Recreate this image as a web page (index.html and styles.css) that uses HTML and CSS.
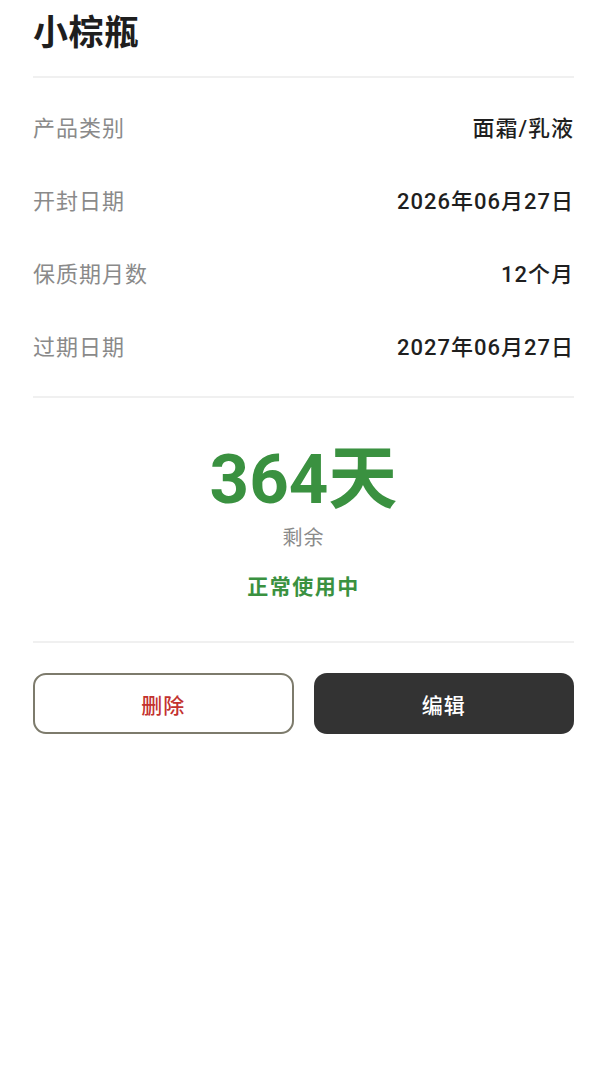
FILE: index.html
```html
<!DOCTYPE html>
<html lang="zh-CN">
<head>
<meta charset="utf-8">
<title>小棕瓶</title>
<link rel="stylesheet" href="styles.css">
</head>
<body>
<div class="page">
  <h1 class="title">小棕瓶</h1>
  <hr class="divider">
  <div class="info">
    <div class="row"><span class="label">产品类别</span><span class="value">面霜/乳液</span></div>
    <div class="row"><span class="label">开封日期</span><span class="value">2026年06月27日</span></div>
    <div class="row"><span class="label">保质期月数</span><span class="value">12个月</span></div>
    <div class="row"><span class="label">过期日期</span><span class="value">2027年06月27日</span></div>
  </div>
  <hr class="divider">
  <div class="remain">
    <div class="days">364天</div>
    <div class="remain-label">剩余</div>
    <div class="status">正常使用中</div>
  </div>
  <hr class="divider">
  <div class="actions">
    <button class="btn btn-delete">删除</button>
    <button class="btn btn-edit">编辑</button>
  </div>
</div>
</body>
</html>
```
FILE: styles.css
```css
* { box-sizing: border-box; }
html, body {
  margin: 0;
  padding: 0;
  background: #ffffff;
}
body {
  font-family: Roboto, "Noto Sans CJK SC", "Noto Sans", sans-serif;
  color: #222222;
}
.page {
  padding: 13px 33px 0 33px;
}
.title {
  margin: 0;
  font-size: 35px;
  line-height: 42px;
  font-weight: 700;
  color: #1e1e1e;
  letter-spacing: 0.5px;
}
.divider {
  border: 0;
  height: 2px;
  background: #f0f0f0;
  margin: 0;
}
.title + .divider {
  margin-top: 21px;
}
.info {
  padding: 11px 0 15px;
}
.row {
  height: 73px;
  display: flex;
  align-items: center;
  justify-content: space-between;
}
.label {
  font-size: 22px;
  color: #8a8a8a;
  letter-spacing: 1px;
}
.value {
  font-size: 22px;
  font-weight: 500;
  color: #1f1f1f;
  letter-spacing: 1px;
}
.remain {
  display: flex;
  flex-direction: column;
  align-items: center;
  padding: 40px 0 40px;
}
.days {
  font-size: 69px;
  line-height: 84px;
  font-weight: 700;
  color: #3a9140;
}
.remain-label {
  margin-top: 2px;
  font-size: 20px;
  line-height: 28px;
  color: #8a8a8a;
  letter-spacing: 1px;
}
.status {
  margin-top: 21px;
  font-size: 21px;
  line-height: 28px;
  font-weight: 700;
  color: #3a9140;
  letter-spacing: 1.5px;
}
.actions {
  display: grid;
  grid-template-columns: 1fr 1fr;
  gap: 20px;
  margin-top: 30px;
}
.btn {
  height: 61px;
  border-radius: 13px;
  font-family: "Noto Sans CJK SC", "Noto Sans", sans-serif;
  font-size: 21px;
  font-weight: 500;
  letter-spacing: 1px;
  cursor: pointer;
}
.btn-delete {
  background: #ffffff;
  border: 2px solid #7d7b6c;
  color: #c3322f;
}
.btn-edit {
  background: #333333;
  border: 0;
  color: #ffffff;
}
```
